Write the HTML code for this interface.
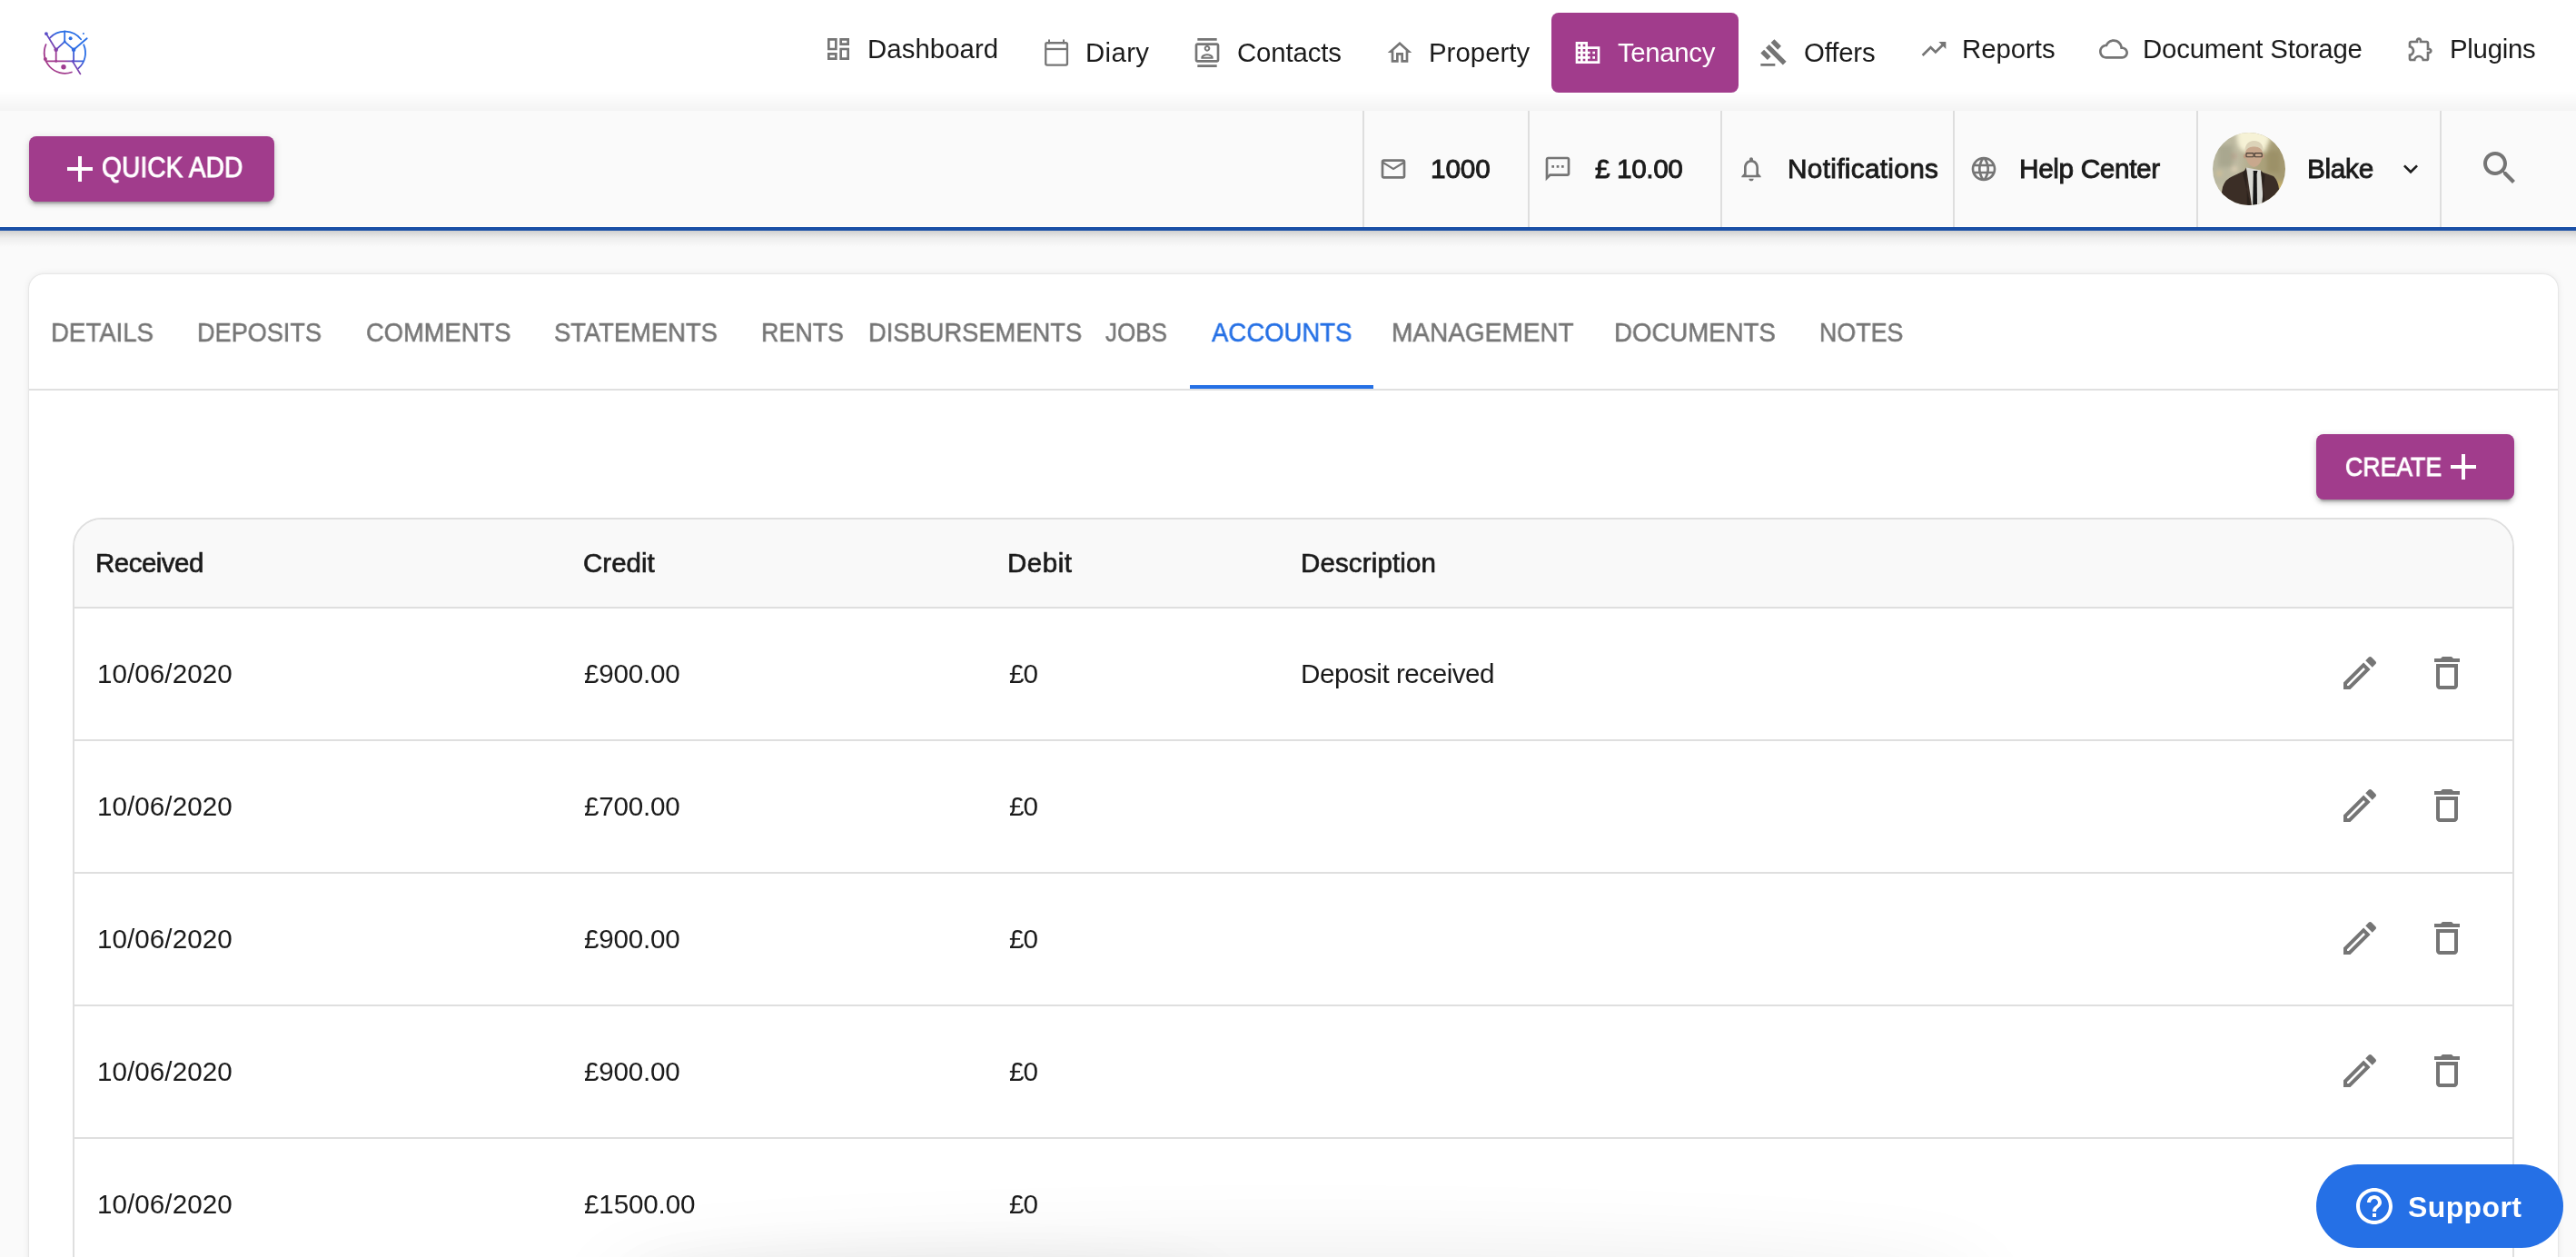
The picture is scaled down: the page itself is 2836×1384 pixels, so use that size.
<!DOCTYPE html>
<html><head><meta charset="utf-8">
<style>
html,body{margin:0;padding:0;}
body{width:2836px;height:1384px;overflow:hidden;position:relative;background:#fafafa;font-family:"Liberation Sans", sans-serif;}
.abs{position:absolute;}
.tx{position:absolute;line-height:0;white-space:nowrap;font-family:"Liberation Sans", sans-serif;will-change:transform;}
.ic{position:absolute;overflow:visible;}
#hdr{position:absolute;left:0;top:0;width:2836px;height:122px;background:#fff;}
#hdrsh{position:absolute;left:0;top:100px;width:2836px;height:22px;background:linear-gradient(to bottom,rgba(0,0,0,0),rgba(0,0,0,0.045));}
#bar2{position:absolute;left:0;top:122px;width:2836px;height:128px;background:#fafafa;}
#wl{position:absolute;left:0;top:249px;width:2836px;height:1px;background:#fff;}
#bl{position:absolute;left:0;top:250px;width:2836px;height:4px;background:#1a4fa6;}
#blsh{position:absolute;left:0;top:254px;width:2836px;height:18px;background:linear-gradient(to bottom,rgba(0,0,0,0.17),rgba(0,0,0,0.05) 45%,rgba(0,0,0,0));}
.dv{position:absolute;top:122px;width:2px;height:128px;background:#dedede;}
.btn{position:absolute;background:#a13c8c;border-radius:8px;box-shadow:0 6px 2px -4px rgba(0,0,0,0.2),0 4px 4px 0 rgba(0,0,0,0.14),0 2px 10px 0 rgba(0,0,0,0.12);}
#card{position:absolute;left:32px;top:302px;width:2784px;height:1200px;background:#fff;border-radius:16px;box-shadow:0 0 2px rgba(0,0,0,0.16),0 0 9px rgba(0,0,0,0.08);}
#tabline{position:absolute;left:32px;top:428px;width:2784px;height:2px;background:#e0e0e0;}
#tabact{position:absolute;left:1310px;top:424px;width:202px;height:4px;background:#2570e5;}
#tbl{position:absolute;left:80px;top:570px;width:2684px;height:1000px;border:2px solid #dfdfdf;border-radius:32px 32px 0 0;background:#fff;overflow:hidden;}
#thead{position:absolute;left:0;top:0;width:2684px;height:98px;background:#f9f9f9;}
.rl{position:absolute;left:82px;width:2684px;height:2px;background:#dfdfdf;}
#support{position:absolute;left:2550px;top:1282px;width:272px;height:92px;border-radius:46px;background:#2570e6;}
#botsh{position:absolute;left:700px;top:1412px;width:1450px;height:30px;border-radius:50%;box-shadow:0 0 90px 36px rgba(0,0,0,0.075);}
#botsh2{position:absolute;left:720px;top:1404px;width:600px;height:20px;border-radius:50%;box-shadow:0 0 50px 24px rgba(0,0,0,0.05);}
</style></head><body>
<div id="hdr"></div>
<div id="hdrsh"></div>
<div id="bar2"></div>
<div id="wl"></div>
<div id="bl"></div>
<div id="blsh"></div>
<div class="dv" style="left:1500px"></div>
<div class="dv" style="left:1682px"></div>
<div class="dv" style="left:1894px"></div>
<div class="dv" style="left:2150px"></div>
<div class="dv" style="left:2418px"></div>
<div class="dv" style="left:2686px"></div>
<!-- logo -->
<svg class="ic" style="left:0px;top:0px;width:140px;height:100px" viewBox="0 0 140 100">
 <defs><linearGradient id="lg" gradientUnits="userSpaceOnUse" x1="58" y1="72" x2="83" y2="47"><stop offset="0" stop-color="#a33b8b"/><stop offset="0.35" stop-color="#9c3c96"/><stop offset="0.55" stop-color="#5a4cc8"/><stop offset="0.8" stop-color="#2f6be2"/><stop offset="1" stop-color="#2a6fe6"/></linearGradient></defs>
 <g fill="none" stroke="url(#lg)" stroke-width="1.8" stroke-linecap="round" stroke-linejoin="round">
  <path d="M50.6 49 A22.7 22.7 0 0 0 78.9 79.5"/>
  <path d="M55 41.6 A22.7 22.7 0 0 1 89.1 43.2"/>
  <path d="M92.2 49.3 A22.7 22.7 0 0 1 86.2 75.4"/>
  <path d="M50.9 37.1 L61.7 54.7 L71.2 45.8 L81.1 54.7 L95.7 42.3"/>
  <path d="M71.2 45.8 V34.5"/>
  <path d="M61.7 54.7 V67.4 M50.5 67.4 H91.3 M81.1 54.7 V67.4 M79.8 67.4 L88.4 81.4"/>
 </g>
 <g fill="url(#lg)"><circle cx="50.9" cy="37.1" r="1.9"/><circle cx="77.6" cy="42.2" r="2"/><circle cx="91.9" cy="37.1" r="1"/><circle cx="70" cy="73.8" r="2.7"/><circle cx="49.9" cy="64.9" r="2"/><circle cx="61.7" cy="54.7" r="2.3"/><circle cx="81.1" cy="54.7" r="2.3"/><circle cx="71.2" cy="45.8" r="1.4"/><circle cx="61.7" cy="67.4" r="1.4"/><circle cx="80.5" cy="67.4" r="1.4"/></g>
</svg>
<div class="btn" style="left:32px;top:150px;width:270px;height:72px"></div>
<!-- avatar -->
<svg class="ic" style="left:2436px;top:146px;width:80px;height:80px" viewBox="0 0 80 80">
 <defs><clipPath id="ac"><circle cx="40" cy="40" r="40"/></clipPath>
 <filter id="bl1" x="-20%" y="-20%" width="140%" height="140%"><feGaussianBlur stdDeviation="2.5"/></filter>
 <filter id="bl2" x="-20%" y="-20%" width="140%" height="140%"><feGaussianBlur stdDeviation="0.6"/></filter>
 <linearGradient id="abg" x1="0" y1="0" x2="1" y2="0"><stop offset="0" stop-color="#b9b79f"/><stop offset="0.35" stop-color="#bdb9a0"/><stop offset="0.65" stop-color="#aba27c"/><stop offset="1" stop-color="#a39870"/></linearGradient></defs>
 <g clip-path="url(#ac)">
  <rect width="80" height="80" fill="url(#abg)"/>
  <g filter="url(#bl1)">
   <path d="M26 -5 L27 10 Q29 19 34 21 L58 21 Q60 14 63 9 L65 -5Z" fill="#f6f2d6"/>
   <circle cx="24" cy="40" r="2.6" fill="#f1dcc0"/><circle cx="23" cy="26" r="2.5" fill="#b98f80"/>
   <circle cx="7" cy="45" r="2.2" fill="#e6c68f"/>
   <rect x="0" y="58" width="16" height="22" fill="#c2bea6"/>
   <rect x="66" y="54" width="14" height="26" fill="#c4ae68"/>
   <rect x="6" y="14" width="16" height="24" fill="#a9a78f"/>
   <rect x="60" y="20" width="14" height="24" fill="#9c9168"/>
  </g>
  <g filter="url(#bl2)">
   <path d="M7 82 L11 60 Q14 51 22 48 L37 41 L45 45 L53 43 L67 48 Q72 53 73 62 L74 82Z" fill="#3a2d26"/>
   <path d="M37 38.5 L43 80 L56 78 L53 41.5 Z" fill="#d9d9d3"/>
   <path d="M44.8 44 L44.2 80 L49 80 L48.6 44 Z" fill="#171414"/>
   <path d="M44.5 42 L49.5 42 L48.6 45 L45 45Z" fill="#171414"/>
   <path d="M37 38.5 L33 45 L42 80 L38 80Z" fill="#2c221d"/>
   <path d="M53 41.5 L57.5 47 L54 80 L58 80Z" fill="#2c221d"/>
   <path d="M36 22 Q36.5 36 45.5 38 Q54.5 36 55 22 Q55 13 45.5 13 Q36 13 36 22Z" fill="#c8a88d"/><ellipse cx="35.6" cy="26" rx="1.6" ry="2.6" fill="#c09c82"/><ellipse cx="55.4" cy="26" rx="1.6" ry="2.6" fill="#c09c82"/>
   <path d="M35.5 22 Q35 9.5 45.5 9 Q56.5 9.5 55.5 22 Q53 15 45.5 15.5 Q38 15 35.5 22Z" fill="#dcd3b8"/>
   <rect x="37" y="22.6" width="8" height="4.2" rx="0.8" fill="none" stroke="#463c35" stroke-width="1.1"/>
   <rect x="46.2" y="22.6" width="8" height="4.2" rx="0.8" fill="none" stroke="#463c35" stroke-width="1.1"/>
  </g>
 </g>
</svg>
<div id="card"></div>
<div id="tabline"></div>
<div id="tabact"></div>
<div class="btn" style="left:2550px;top:478px;width:218px;height:72px"></div>
<div id="tbl"><div id="thead"></div></div>
<div class="rl" style="top:668px"></div>
<div class="rl" style="top:814px"></div>
<div class="rl" style="top:960px"></div>
<div class="rl" style="top:1106px"></div>
<div class="rl" style="top:1252px"></div>
<div id="botsh"></div><div id="botsh2"></div>
<div class="btn" style="left:1708px;top:14px;width:206px;height:88px;box-shadow:none"></div>
<svg class="ic" style="left:907.00px;top:38.00px;width:32px;height:32px" viewBox="0 0 24 24"><path fill="#757575" d="M19 5v2h-4V5h4M9 5v6H5V5h4m10 8v6h-4v-6h4M9 17v2H5v-2h4M21 3h-8v6h8V3zM11 3H3v10h8V3zm10 8h-8v10h8V11zm-10 4H3v6h8v-6z"/></svg>
<svg class="ic" style="left:1146px;top:40px;width:34px;height:36px" viewBox="0 0 34 36"><rect x="5.25" y="7.25" width="23.7" height="24.3" rx="1.6" fill="none" stroke="#757575" stroke-width="2.3"/><line x1="5.25" y1="14" x2="28.95" y2="14" stroke="#757575" stroke-width="2.3"/><line x1="9" y1="4.2" x2="9" y2="7.5" stroke="#757575" stroke-width="2" stroke-linecap="round"/><line x1="25" y1="4.2" x2="25" y2="7.5" stroke="#757575" stroke-width="2" stroke-linecap="round"/></svg>
<svg class="ic" style="left:1313.30px;top:42.00px;width:32px;height:32px" viewBox="0 0 24 24"><path fill="#757575" d="M20 0H4v2h16V0zM4 24h16v-2H4v2zM20 4H4c-1.1 0-2 .9-2 2v12c0 1.1.9 2 2 2h16c1.1 0 2-.9 2-2V6c0-1.1-.9-2-2-2zm0 14H4V6h16v12zm-8-7c1.38 0 2.5-1.12 2.5-2.5S13.38 6 12 6 9.5 7.12 9.5 8.5 10.62 11 12 11zm0-3.5c.55 0 1 .45 1 1s-.45 1-1 1-1-.45-1-1 .45-1 1-1zM17 15.99c0-2.09-3.31-2.99-5-2.99s-5 .9-5 2.99V17h10v-1.01zm-8.19-.49c.61-.52 2.03-1 3.19-1 1.17 0 2.59.48 3.2 1H8.81z"/></svg>
<svg class="ic" style="left:1525.10px;top:42.00px;width:32px;height:32px" viewBox="0 0 24 24"><path fill="#757575" d="M12 5.69l5 4.5V18h-2v-6H9v6H7v-7.81l5-4.5M12 3L2 12h3v8h6v-6h2v6h6v-8h3L12 3z"/></svg>
<svg class="ic" style="left:1732.30px;top:42.00px;width:32px;height:32px" viewBox="0 0 24 24"><path fill="#ffffff" d="M12 7V3H2v18h20V7H12zM6 19H4v-2h2v2zm0-4H4v-2h2v2zm0-4H4V9h2v2zm0-4H4V5h2v2zm4 12H8v-2h2v2zm0-4H8v-2h2v2zm0-4H8V9h2v2zm0-4H8V5h2v2zm10 12h-8v-2h2v-2h-2v-2h2v-2h-2V9h8v10zm-2-8h-2v2h2v-2zm0 4h-2v2h2v-2z"/></svg>
<svg class="ic" style="left:1937.10px;top:42.00px;width:32px;height:32px" viewBox="0 0 24 24"><path fill="#757575" d="M1 21h12v2H1v-2zM5.245 8.07l2.83-2.827 14.14 14.142-2.828 2.828L5.245 8.07zM12.317 1l5.657 5.656-2.83 2.83-5.654-5.66L12.317 1zM3.825 9.485l5.657 5.657-2.828 2.828-5.657-5.657 2.828-2.828z"/></svg>
<svg class="ic" style="left:2112.80px;top:37.60px;width:32px;height:32px" viewBox="0 0 24 24"><path fill="#757575" d="M16 6l2.29 2.29-4.88 4.88-4-4L2 16.59 3.41 18l6-6 4 4 6.3-6.29L22 12V6z"/></svg>
<svg class="ic" style="left:2311.00px;top:38.00px;width:32px;height:32px" viewBox="0 0 24 24"><path fill="#757575" d="M19.35 10.04C18.67 6.59 15.64 4 12 4 9.11 4 6.6 5.64 5.35 8.04 2.34 8.36 0 10.91 0 14c0 3.31 2.69 6 6 6h13c2.76 0 5-2.24 5-5 0-2.64-2.05-4.78-4.650-4.96zM19 18H6c-2.21 0-4-1.790-4-4s1.79-4 4-4h.71C7.37 7.69 9.48 6 12 6c3.04 0 5.5 2.46 5.5 5.5v.5H19c1.66 0 3 1.34 3 3s-1.34 3-3 3z"/></svg>
<svg class="ic" style="left:2648.60px;top:38.20px;width:32px;height:32px" viewBox="0 0 24 24"><path fill="#757575" d="M10.5 4.5c.28 0 .5.22.5.5v2h6v6h2c.28 0 .5.22.5.5s-.22.5-.5.5h-2v6h-2.12c-.68-1.75-2.39-3-4.38-3s-3.7 1.25-4.38 3H4v-2.12c1.75-.68 3-2.39 3-4.38 0-1.99-1.24-3.7-2.99-4.38L4 7h6V5c0-.28.22-.5.5-.5m0-2C9.12 2.5 8 3.62 8 5H4c-1.1 0-1.99.9-1.99 2v3.8h.29c1.49 0 2.7 1.21 2.7 2.7s-1.21 2.7-2.7 2.7H2V20c0 1.1.9 2 2 2h3.8v-.3c0-1.49 1.21-2.7 2.7-2.7s2.7 1.21 2.7 2.7v.3H17c1.1 0 2-.9 2-2v-4c1.38 0 2.5-1.12 2.5-2.5S20.38 11 19 11V7c0-1.1-.9-2-2-2h-4c0-1.380-1.12-2.5-2.5-2.5z"/></svg>
<svg class="ic" style="left:1518.30px;top:170.00px;width:32px;height:32px" viewBox="0 0 24 24"><path fill="#757575" d="M20 4H4c-1.1 0-1.99.9-1.99 2L2 18c0 1.1.9 2 2 2h16c1.1 0 2-.9 2-2V6c0-1.1-.9-2-2-2zm0 14H4V8l8 5 8-5v10zm-8-7L4 6h16l-8 5z"/></svg>
<svg class="ic" style="left:1699.20px;top:170.00px;width:32px;height:32px" viewBox="0 0 24 24"><path fill="#757575" d="M20 2H4c-1.1 0-1.99.9-1.99 2L2 22l4-4h14c1.1 0 2-.9 2-2V4c0-1.1-.9-2-2-2zm0 14H5.17l-.59.59-.58.58V4h16v12zM7 9h2v2H7zm4 0h2v2h-2zm4 0h2v2h-2z"/></svg>
<svg class="ic" style="left:1911.90px;top:170.00px;width:32px;height:32px" viewBox="0 0 24 24"><path fill="#757575" d="M12 22c1.1 0 2-.9 2-2h-4c0 1.1.9 2 2 2zm6-6v-5c0-3.07-1.63-5.64-4.5-6.32V4c0-.83-.67-1.5-1.5-1.5s-1.5.67-1.5 1.5v.68C7.64 5.36 6 7.920 6 11v5l-2 2v1h16v-1l-2-2zm-2 1H8v-6c0-2.48 1.51-4.5 4-4.5s4 2.02 4 4.5v6z"/></svg>
<svg class="ic" style="left:2167.60px;top:170.00px;width:32px;height:32px" viewBox="0 0 24 24"><path fill="#757575" d="M11.99 2C6.47 2 2 6.48 2 12s4.47 10 9.99 10C17.52 22 22 17.52 22 12S17.52 2 11.99 2zm6.93 6h-2.95c-.32-1.25-.78-2.45-1.38-3.56 1.84.63 3.37 1.91 4.33 3.56zM12 4.04c.83 1.2 1.48 2.53 1.91 3.96h-3.82c.43-1.43 1.08-2.76 1.91-3.96zM4.26 14C4.1 13.36 4 12.69 4 12s.1-1.36.26-2h3.38c-.08.66-.14 1.32-.14 2 0 .68.06 1.34.14 2H4.26zm.82 2h2.95c.32 1.25.78 2.45 1.38 3.56-1.84-.63-3.37-1.9-4.33-3.56zm2.95-8H5.08c.96-1.66 2.49-2.93 4.33-3.56C8.81 5.55 8.35 6.75 8.03 8zM12 19.96c-.83-1.2-1.48-2.53-1.91-3.96h3.820c-.43 1.43-1.08 2.76-1.91 3.96zM14.34 14H9.66c-.09-.66-.16-1.32-.16-2 0-.68.07-1.35.16-2h4.68c.09.65.16 1.32.16 2 0 .68-.07 1.34-.16 2zm.25 5.56c.6-1.11 1.06-2.31 1.38-3.56h2.95c-.96 1.65-2.49 2.93-4.33 3.56zM16.36 14c.08-.66.14-1.32.14-2 0-.68-.06-1.34-.14-2h3.38c.16.64.26 1.31.26 2s-.1 1.36-.26 2h-3.38z"/></svg>
<svg class="ic" style="left:2638.00px;top:170.20px;width:32px;height:32px" viewBox="0 0 24 24"><path fill="#1b1b1b" d="M16.59 8.59L12 13.17 7.41 8.59 6 10l6 6 6-6z"/></svg>
<svg class="ic" style="left:2728.00px;top:161.00px;width:48px;height:48px" viewBox="0 0 24 24"><path fill="#757575" d="M15.5 14h-.79l-.28-.27C15.41 12.59 16 11.11 16 9.5 16 5.91 13.09 3 9.5 3S3 5.910 3 9.5 5.91 16 9.5 16c1.61 0 3.09-.59 4.23-1.57l.27.28v.79l5 4.99L20.49 19l-4.99-5zm-6 0C7.01 14 5 11.99 5 9.5S7.01 5 9.5 5 14 7.01 14 9.5 11.99 14 9.5 14z"/></svg>
<svg class="ic" style="left:63.80px;top:161.70px;width:48px;height:48px" viewBox="0 0 24 24"><path fill="#ffffff" d="M19 13h-6v6h-2v-6H5v-2h6V5h2v6h6v2z"/></svg>
<svg class="ic" style="left:2687.70px;top:489.80px;width:48px;height:48px" viewBox="0 0 24 24"><path fill="#ffffff" d="M19 13h-6v6h-2v-6H5v-2h6V5h2v6h6v2z"/></svg>
<svg class="ic" style="left:2574.00px;top:717.00px;width:48px;height:48px" viewBox="0 0 24 24"><path fill="#757575" d="M3 17.25V21h3.75L17.81 9.94l-3.75-3.75L3 17.25zM5.92 19H5v-.92l9.06-9.06.92.92L5.92 19zM20.71 5.63l-2.34-2.34c-.2-.2-.45-.29-.71-.29s-.51.1-.7.29l-1.83 1.83 3.75 3.75 1.83-1.83c.39-.39.39-1.02 0-1.41z"/></svg>
<svg class="ic" style="left:2670.00px;top:717.00px;width:48px;height:48px" viewBox="0 0 24 24"><path fill="#757575" d="M6 19c0 1.1.9 2 2 2h8c1.1 0 2-.9 2-2V7H6v12zM8 9h8v10H8V9zm7.5-5l-1-1h-5l-1 1H5v2h14V4z"/></svg>
<svg class="ic" style="left:2574.00px;top:863.00px;width:48px;height:48px" viewBox="0 0 24 24"><path fill="#757575" d="M3 17.25V21h3.75L17.81 9.94l-3.75-3.75L3 17.25zM5.92 19H5v-.92l9.06-9.06.92.92L5.92 19zM20.71 5.63l-2.34-2.34c-.2-.2-.45-.29-.71-.29s-.51.1-.7.29l-1.83 1.83 3.75 3.75 1.83-1.83c.39-.39.39-1.02 0-1.41z"/></svg>
<svg class="ic" style="left:2670.00px;top:863.00px;width:48px;height:48px" viewBox="0 0 24 24"><path fill="#757575" d="M6 19c0 1.1.9 2 2 2h8c1.1 0 2-.9 2-2V7H6v12zM8 9h8v10H8V9zm7.5-5l-1-1h-5l-1 1H5v2h14V4z"/></svg>
<svg class="ic" style="left:2574.00px;top:1009.00px;width:48px;height:48px" viewBox="0 0 24 24"><path fill="#757575" d="M3 17.25V21h3.75L17.81 9.94l-3.75-3.75L3 17.25zM5.92 19H5v-.92l9.06-9.06.92.92L5.92 19zM20.71 5.63l-2.34-2.34c-.2-.2-.45-.29-.71-.29s-.51.1-.7.29l-1.83 1.83 3.75 3.75 1.83-1.83c.39-.39.39-1.02 0-1.41z"/></svg>
<svg class="ic" style="left:2670.00px;top:1009.00px;width:48px;height:48px" viewBox="0 0 24 24"><path fill="#757575" d="M6 19c0 1.1.9 2 2 2h8c1.1 0 2-.9 2-2V7H6v12zM8 9h8v10H8V9zm7.5-5l-1-1h-5l-1 1H5v2h14V4z"/></svg>
<svg class="ic" style="left:2574.00px;top:1155.00px;width:48px;height:48px" viewBox="0 0 24 24"><path fill="#757575" d="M3 17.25V21h3.75L17.81 9.94l-3.75-3.75L3 17.25zM5.92 19H5v-.92l9.06-9.06.92.92L5.92 19zM20.71 5.63l-2.34-2.34c-.2-.2-.45-.29-.71-.29s-.51.1-.7.29l-1.83 1.83 3.75 3.75 1.83-1.83c.39-.39.39-1.02 0-1.41z"/></svg>
<svg class="ic" style="left:2670.00px;top:1155.00px;width:48px;height:48px" viewBox="0 0 24 24"><path fill="#757575" d="M6 19c0 1.1.9 2 2 2h8c1.1 0 2-.9 2-2V7H6v12zM8 9h8v10H8V9zm7.5-5l-1-1h-5l-1 1H5v2h14V4z"/></svg>
<svg class="ic" style="left:2574.00px;top:1301.00px;width:48px;height:48px" viewBox="0 0 24 24"><path fill="#757575" d="M3 17.25V21h3.75L17.81 9.94l-3.75-3.75L3 17.25zM5.92 19H5v-.92l9.06-9.06.92.92L5.92 19zM20.71 5.63l-2.34-2.34c-.2-.2-.45-.29-.71-.29s-.51.1-.7.29l-1.83 1.83 3.75 3.75 1.83-1.83c.39-.39.39-1.02 0-1.41z"/></svg>
<svg class="ic" style="left:2670.00px;top:1301.00px;width:48px;height:48px" viewBox="0 0 24 24"><path fill="#757575" d="M6 19c0 1.1.9 2 2 2h8c1.1 0 2-.9 2-2V7H6v12zM8 9h8v10H8V9zm7.5-5l-1-1h-5l-1 1H5v2h14V4z"/></svg>
<div id="support"></div>
<div class="tx" style="left:954.70px;top:53.72px;font-size:29.36px;font-weight:400;letter-spacing:0.062px;color:#1b1b1b;">Dashboard</div>
<div class="tx" style="left:1194.90px;top:57.82px;font-size:29.36px;font-weight:400;letter-spacing:0.367px;color:#1b1b1b;">Diary</div>
<div class="tx" style="left:1361.60px;top:57.52px;font-size:29.36px;font-weight:400;letter-spacing:-0.140px;color:#1b1b1b;">Contacts</div>
<div class="tx" style="left:1572.80px;top:57.52px;font-size:29.36px;font-weight:400;letter-spacing:0.032px;color:#1b1b1b;">Property</div>
<div class="tx" style="left:1781.00px;top:58.02px;font-size:29.36px;font-weight:400;letter-spacing:-0.329px;color:#ffffff;">Tenancy</div>
<div class="tx" style="left:1985.50px;top:58.02px;font-size:29.36px;font-weight:400;letter-spacing:-0.165px;color:#1b1b1b;">Offers</div>
<div class="tx" style="left:2160.00px;top:53.82px;font-size:29.36px;font-weight:400;letter-spacing:-0.020px;color:#1b1b1b;">Reports</div>
<div class="tx" style="left:2358.60px;top:53.82px;font-size:29.36px;font-weight:400;letter-spacing:-0.191px;color:#1b1b1b;">Document Storage</div>
<div class="tx" style="left:2696.90px;top:53.92px;font-size:29.36px;font-weight:400;letter-spacing:-0.269px;color:#1b1b1b;">Plugins</div>
<div class="tx" style="left:1575.20px;top:185.77px;font-size:29.8px;font-weight:400;letter-spacing:-0.138px;color:#1b1b1b;-webkit-text-stroke:0.9px #1b1b1b;">1000</div>
<div class="tx" style="left:1756.20px;top:185.77px;font-size:29.8px;font-weight:400;letter-spacing:-0.424px;color:#1b1b1b;-webkit-text-stroke:0.9px #1b1b1b;">£ 10.00</div>
<div class="tx" style="left:1967.50px;top:185.77px;font-size:29.8px;font-weight:400;letter-spacing:0.300px;color:#1b1b1b;-webkit-text-stroke:0.9px #1b1b1b;">Notifications</div>
<div class="tx" style="left:2223.40px;top:185.67px;font-size:29.8px;font-weight:400;letter-spacing:-0.377px;color:#1b1b1b;-webkit-text-stroke:0.9px #1b1b1b;">Help Center</div>
<div class="tx" style="left:2540.20px;top:185.67px;font-size:29.8px;font-weight:400;letter-spacing:-0.316px;color:#1b1b1b;-webkit-text-stroke:0.9px #1b1b1b;">Blake</div>
<div class="tx" style="left:56.05px;top:365.67px;font-size:29.8px;font-weight:400;letter-spacing:0.000px;color:#767676;-webkit-text-stroke:0.5px #767676;transform:scaleX(0.9269);transform-origin:0 0;">DETAILS</div>
<div class="tx" style="left:217.18px;top:365.67px;font-size:29.8px;font-weight:400;letter-spacing:0.000px;color:#767676;-webkit-text-stroke:0.5px #767676;transform:scaleX(0.9094);transform-origin:0 0;">DEPOSITS</div>
<div class="tx" style="left:403.08px;top:365.67px;font-size:29.8px;font-weight:400;letter-spacing:0.000px;color:#767676;-webkit-text-stroke:0.5px #767676;transform:scaleX(0.9172);transform-origin:0 0;">COMMENTS</div>
<div class="tx" style="left:609.88px;top:365.67px;font-size:29.8px;font-weight:400;letter-spacing:0.000px;color:#767676;-webkit-text-stroke:0.5px #767676;transform:scaleX(0.9185);transform-origin:0 0;">STATEMENTS</div>
<div class="tx" style="left:837.80px;top:365.67px;font-size:29.8px;font-weight:400;letter-spacing:0.000px;color:#767676;-webkit-text-stroke:0.5px #767676;transform:scaleX(0.9010);transform-origin:0 0;">RENTS</div>
<div class="tx" style="left:955.67px;top:365.67px;font-size:29.8px;font-weight:400;letter-spacing:0.000px;color:#767676;-webkit-text-stroke:0.5px #767676;transform:scaleX(0.9163);transform-origin:0 0;">DISBURSEMENTS</div>
<div class="tx" style="left:1217.20px;top:365.67px;font-size:29.8px;font-weight:400;letter-spacing:0.000px;color:#767676;-webkit-text-stroke:0.5px #767676;transform:scaleX(0.8720);transform-origin:0 0;">JOBS</div>
<div class="tx" style="left:1333.70px;top:365.67px;font-size:29.8px;font-weight:400;letter-spacing:0.000px;color:#2570e5;-webkit-text-stroke:0.5px #2570e5;transform:scaleX(0.9241);transform-origin:0 0;">ACCOUNTS</div>
<div class="tx" style="left:1532.12px;top:365.67px;font-size:29.8px;font-weight:400;letter-spacing:0.000px;color:#767676;-webkit-text-stroke:0.5px #767676;transform:scaleX(0.9401);transform-origin:0 0;">MANAGEMENT</div>
<div class="tx" style="left:1776.75px;top:365.67px;font-size:29.8px;font-weight:400;letter-spacing:0.000px;color:#767676;-webkit-text-stroke:0.5px #767676;transform:scaleX(0.9257);transform-origin:0 0;">DOCUMENTS</div>
<div class="tx" style="left:2002.70px;top:365.67px;font-size:29.8px;font-weight:400;letter-spacing:0.000px;color:#767676;-webkit-text-stroke:0.5px #767676;transform:scaleX(0.8991);transform-origin:0 0;">NOTES</div>
<div class="tx" style="left:104.80px;top:619.87px;font-size:29.51px;font-weight:400;letter-spacing:-0.511px;color:#1b1b1b;-webkit-text-stroke:0.65px #1b1b1b;">Received</div>
<div class="tx" style="left:642.10px;top:619.87px;font-size:29.51px;font-weight:400;letter-spacing:0.021px;color:#1b1b1b;-webkit-text-stroke:0.65px #1b1b1b;">Credit</div>
<div class="tx" style="left:1109.30px;top:619.87px;font-size:29.51px;font-weight:400;letter-spacing:0.507px;color:#1b1b1b;-webkit-text-stroke:0.65px #1b1b1b;">Debit</div>
<div class="tx" style="left:1431.80px;top:619.87px;font-size:29.51px;font-weight:400;letter-spacing:0.135px;color:#1b1b1b;-webkit-text-stroke:0.65px #1b1b1b;">Description</div>
<div class="tx" style="left:106.90px;top:741.72px;font-size:29.65px;font-weight:400;letter-spacing:0.037px;color:#1b1b1b;">10/06/2020</div>
<div class="tx" style="left:642.80px;top:741.72px;font-size:29.65px;font-weight:400;letter-spacing:-0.226px;color:#1b1b1b;">£900.00</div>
<div class="tx" style="left:1111.00px;top:741.72px;font-size:29.65px;font-weight:400;letter-spacing:-0.985px;color:#1b1b1b;">£0</div>
<div class="tx" style="left:1431.90px;top:741.72px;font-size:29.65px;font-weight:400;letter-spacing:-0.479px;color:#1b1b1b;">Deposit received</div>
<div class="tx" style="left:106.90px;top:887.72px;font-size:29.65px;font-weight:400;letter-spacing:0.037px;color:#1b1b1b;">10/06/2020</div>
<div class="tx" style="left:642.80px;top:887.72px;font-size:29.65px;font-weight:400;letter-spacing:-0.226px;color:#1b1b1b;">£700.00</div>
<div class="tx" style="left:1111.00px;top:887.72px;font-size:29.65px;font-weight:400;letter-spacing:-0.985px;color:#1b1b1b;">£0</div>
<div class="tx" style="left:106.90px;top:1033.72px;font-size:29.65px;font-weight:400;letter-spacing:0.037px;color:#1b1b1b;">10/06/2020</div>
<div class="tx" style="left:642.80px;top:1033.72px;font-size:29.65px;font-weight:400;letter-spacing:-0.226px;color:#1b1b1b;">£900.00</div>
<div class="tx" style="left:1111.00px;top:1033.72px;font-size:29.65px;font-weight:400;letter-spacing:-0.985px;color:#1b1b1b;">£0</div>
<div class="tx" style="left:106.90px;top:1179.72px;font-size:29.65px;font-weight:400;letter-spacing:0.037px;color:#1b1b1b;">10/06/2020</div>
<div class="tx" style="left:642.80px;top:1179.72px;font-size:29.65px;font-weight:400;letter-spacing:-0.226px;color:#1b1b1b;">£900.00</div>
<div class="tx" style="left:1111.00px;top:1179.72px;font-size:29.65px;font-weight:400;letter-spacing:-0.985px;color:#1b1b1b;">£0</div>
<div class="tx" style="left:106.90px;top:1325.72px;font-size:29.65px;font-weight:400;letter-spacing:0.037px;color:#1b1b1b;">10/06/2020</div>
<div class="tx" style="left:642.80px;top:1325.72px;font-size:29.65px;font-weight:400;letter-spacing:-0.163px;color:#1b1b1b;">£1500.00</div>
<div class="tx" style="left:1111.00px;top:1325.72px;font-size:29.65px;font-weight:400;letter-spacing:-0.985px;color:#1b1b1b;">£0</div>
<div class="tx" style="left:112.28px;top:185.42px;font-size:30.81px;font-weight:400;letter-spacing:0.000px;color:#ffffff;-webkit-text-stroke:0.9px #ffffff;transform:scaleX(0.9167);transform-origin:0 0;">QUICK ADD</div>
<div class="tx" style="left:2581.81px;top:513.57px;font-size:30.09px;font-weight:400;letter-spacing:0.000px;color:#ffffff;-webkit-text-stroke:0.9px #ffffff;transform:scaleX(0.8861);transform-origin:0 0;">CREATE</div>
<div class="tx" style="left:2650.70px;top:1328.91px;font-size:31.98px;font-weight:700;letter-spacing:0.404px;color:#ffffff;">Support</div>
<svg class="ic" style="left:2590.00px;top:1304.00px;width:48px;height:48px" viewBox="0 0 24 24"><path fill="#ffffff" d="M11 18h2v-2h-2v2zm1-16C6.48 2 2 6.48 2 12s4.48 10 10 10 10-4.48 10-10S17.52 2 12 2zm0 18c-4.41 0-8-3.59-8-8s3.59-8 8-8 8 3.59 8 8-3.59 8-8 8zm0-14c-2.21 0-4 1.79-4 4h2c0-1.1.9-2 2-2s2 .9 2 2c0 2-3 1.75-3 5h2c0-2.25 3-2.5 3-5 0-2.21-1.79-4-4-4z"/></svg>
</body></html>
